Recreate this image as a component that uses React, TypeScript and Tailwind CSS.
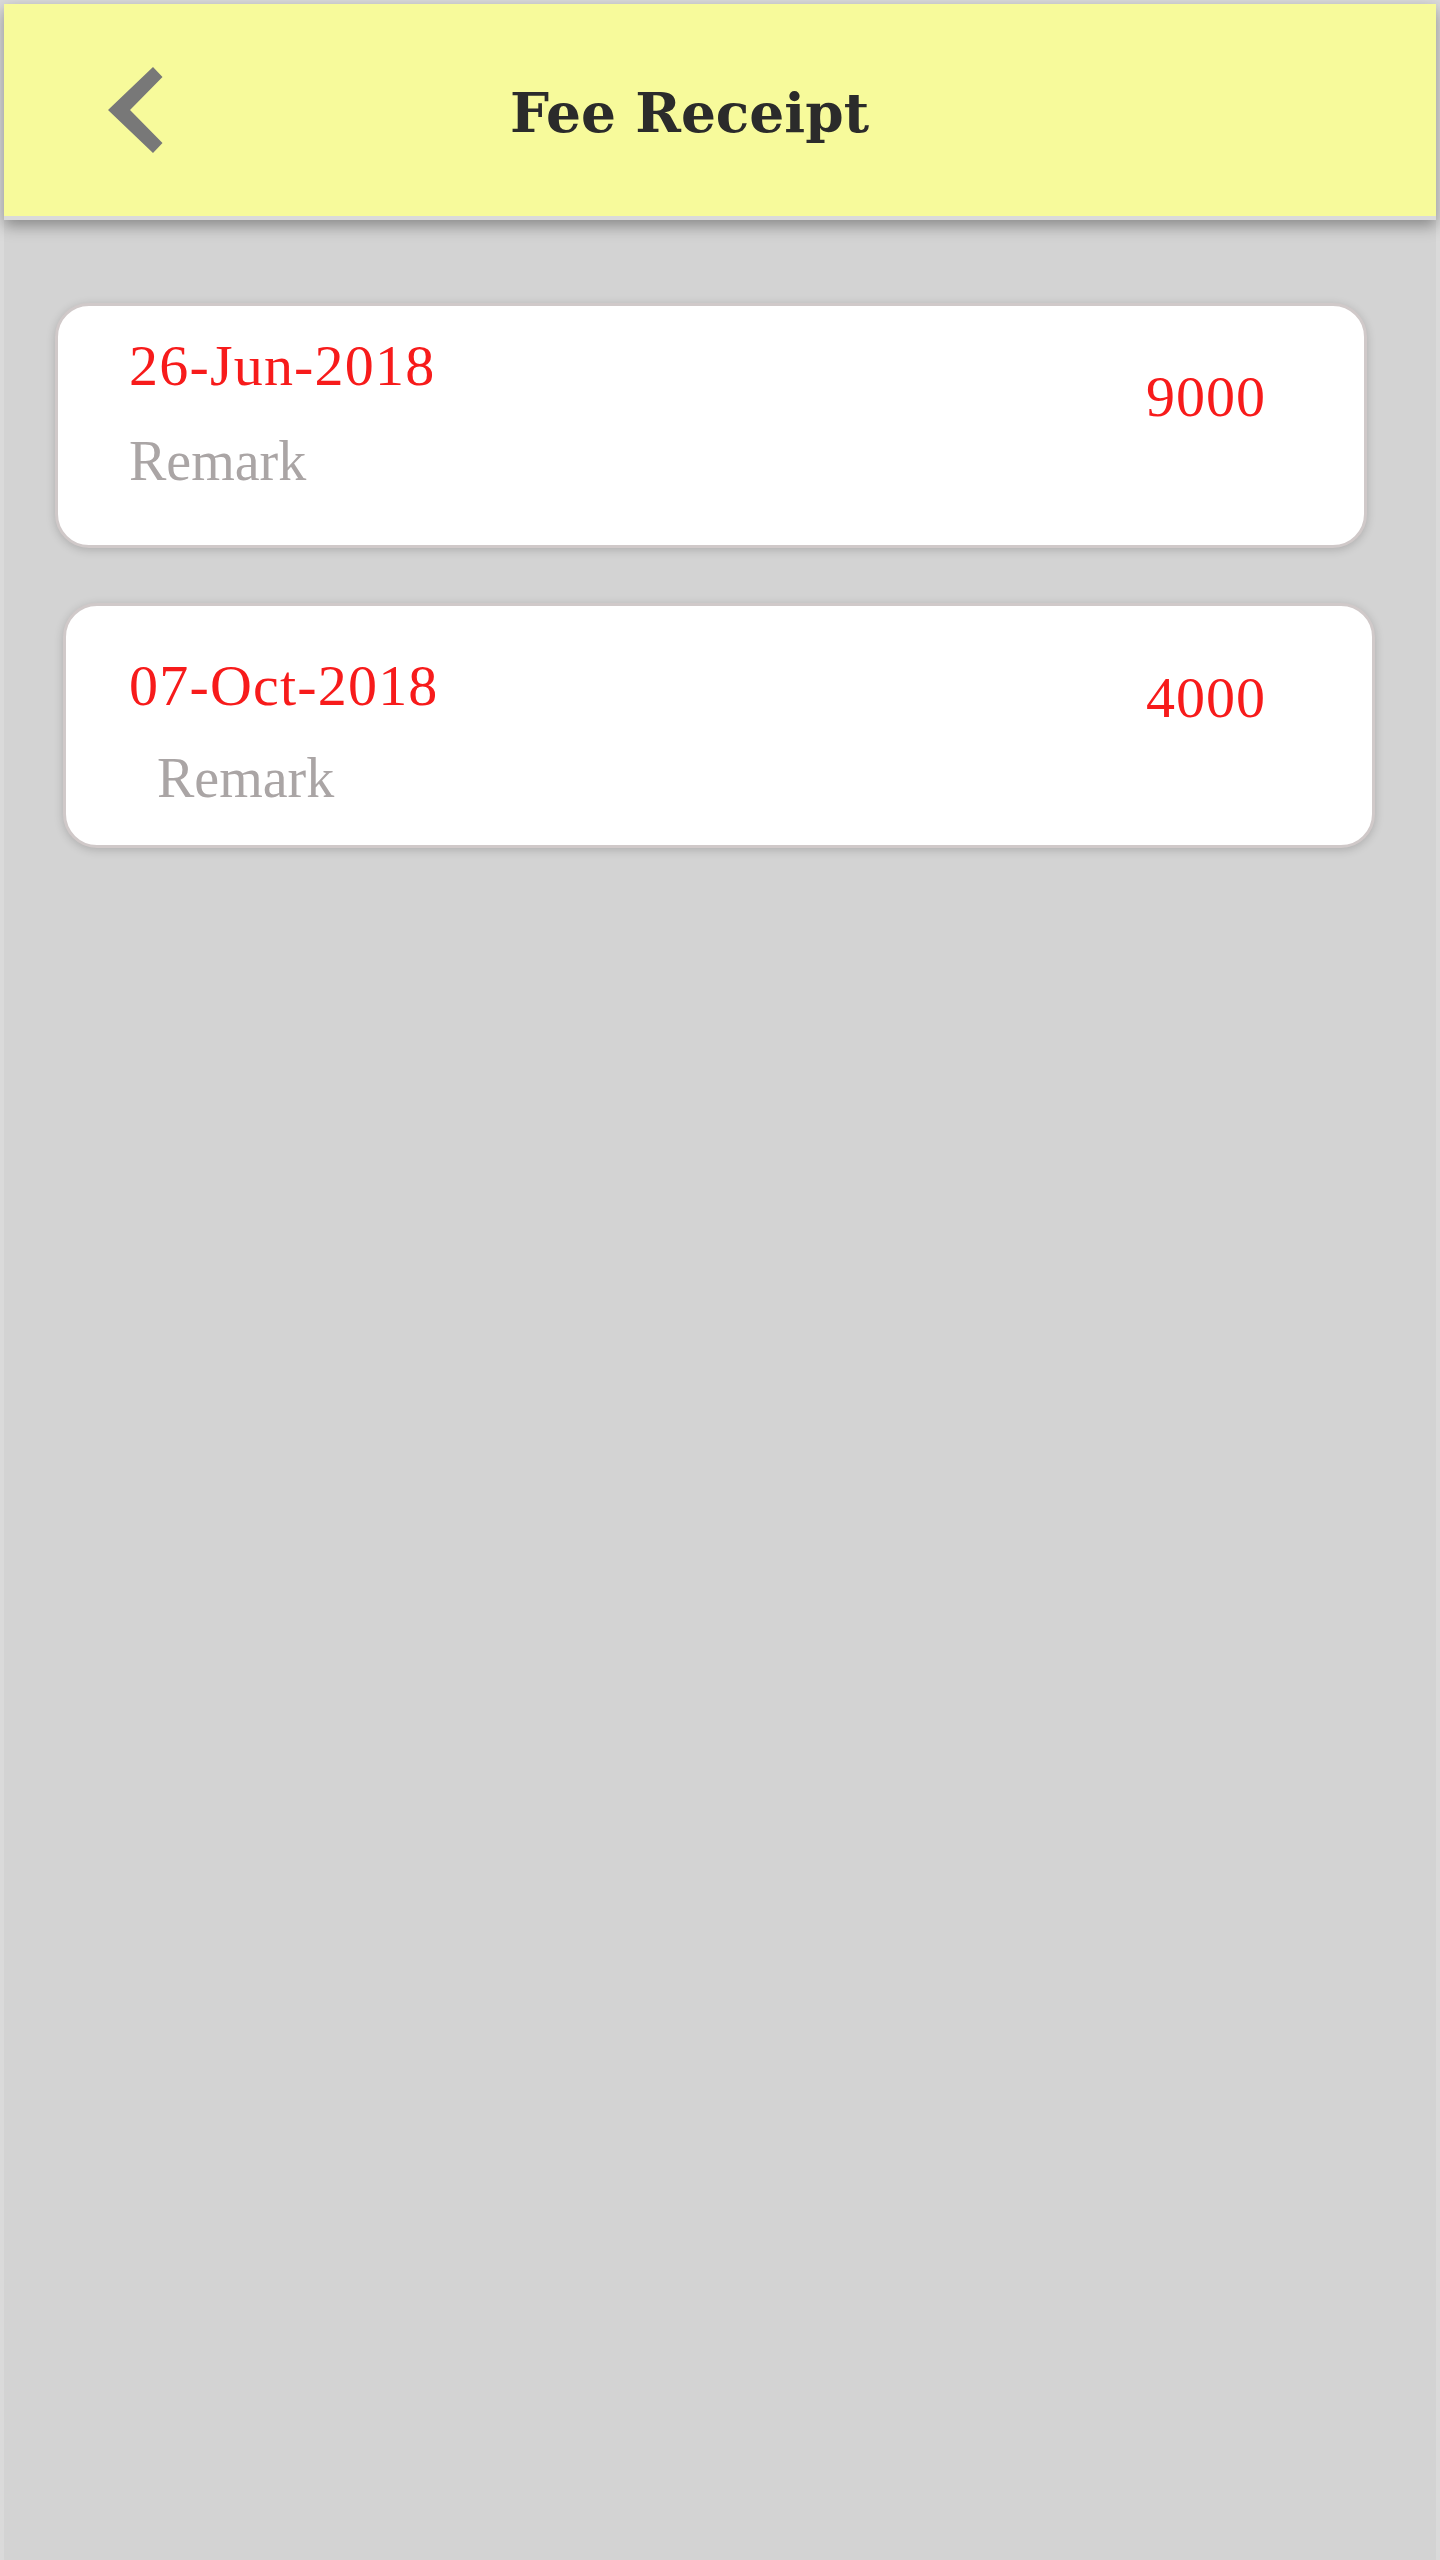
import React from "react";

type Receipt = {
  date: string;
  amount: string;
  remark: string;
  shift: string;
  dateTop: string;
  remarkGap: string;
  remarkIndent: string;
  amountTop: string;
  amountRight: string;
  padLeft: string;
};

const receipts: Receipt[] = [
  {
    date: "26-Jun-2018",
    amount: "9000",
    remark: "Remark",
    shift: "ml-[51px] mt-[83px]",
    dateTop: "pt-[31px]",
    remarkGap: "mt-[38px]",
    remarkIndent: "pl-0",
    amountTop: "pt-[62px]",
    amountRight: "pr-[98px]",
    padLeft: "pl-[71px]",
  },
  {
    date: "07-Oct-2018",
    amount: "4000",
    remark: "Remark",
    shift: "ml-[59px] mt-[55px]",
    dateTop: "pt-[51px]",
    remarkGap: "mt-[35px]",
    remarkIndent: "pl-[28px]",
    amountTop: "pt-[63px]",
    amountRight: "pr-[106px]",
    padLeft: "pl-[63px]",
  },
];

function BackIcon() {
  return (
    <svg width="55" height="86" viewBox="0 0 55 86" className="shrink-0">
      <polygon points="45,0 54.5,10 22,43 54.5,76 45,86 0,43" fill="#787878" />
    </svg>
  );
}

function ReceiptCard({ item }: { item: Receipt }) {
  return (
    <div
      className={`${item.shift} flex h-[245px] w-[1312px] justify-between rounded-[34px] border-[3px] border-[#d0c9c9] bg-white shadow-[0_2px_10px_rgba(0,0,0,0.18)]`}
    >
      <div className={`flex flex-col ${item.padLeft} ${item.dateTop}`}>
        <div className="text-[58px] leading-none tracking-[1.2px] text-[#f71b1b]">
          {item.date}
        </div>
        <div
          className={`${item.remarkGap} ${item.remarkIndent} text-[56px] leading-none text-[#aaa5a5]`}
        >
          {item.remark}
        </div>
      </div>
      <div
        className={`${item.amountTop} ${item.amountRight} text-[58px] leading-none tracking-[1px] text-[#f71b1b]`}
      >
        {item.amount}
      </div>
    </div>
  );
}

function App() {
  return (
    <div
      className="flex min-h-[2560px] flex-col border-x-4 border-t-4 border-[#dadada] bg-[#d3d3d3]"
      style={{ fontFamily: '"Liberation Serif", serif' }}
    >
      <header className="relative z-10 flex h-[216px] items-center border-b-4 border-[#dadada] bg-[#f7fa9b] pl-[104px] shadow-[0_6px_14px_rgba(0,0,0,0.35)]">
        <BackIcon />
        <h1
          className="ml-[347px] mt-[4px] text-[55px] font-bold leading-none text-[#2b2b2b]"
          style={{ fontFamily: '"DejaVu Serif", serif' }}
        >
          Fee Receipt
        </h1>
      </header>

      <main className="flex flex-col">
        {receipts.map((item) => (
          <ReceiptCard key={item.date} item={item} />
        ))}
      </main>
    </div>
  );
}

export default App;
